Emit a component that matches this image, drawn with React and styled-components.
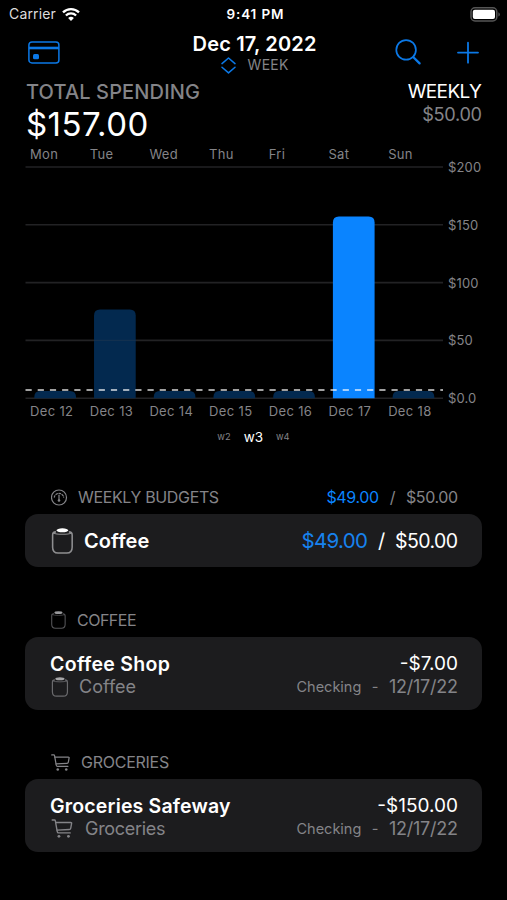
import React from "react";
import styled, { createGlobalStyle } from "styled-components";

const BLUE = "#0a84ff";
const GRAY = "#848488";

const GlobalStyle = createGlobalStyle`
  * { box-sizing: border-box; }
  html, body { margin: 0; background: #000; }
  body { font-family: Inter, "Liberation Sans", sans-serif; color: #fff; }
  svg { display: block; flex: none; }
`;

const Screen = styled.main`
  width: 507px;
  height: 900px;
  overflow: hidden;
  background: #000;
`;

const Text = styled.span`
  display: block;
  white-space: pre;
  font-size: ${(p) => p.$size}px;
  line-height: ${(p) => p.$line || 24}px;
  font-weight: ${(p) => p.$weight || 400};
  letter-spacing: ${(p) => p.$track || 0}px;
  margin-right: ${(p) => -(p.$track || 0)}px;
  color: ${(p) => p.$color || "#fff"};
`;

const StatusBar = styled.header`
  display: grid;
  grid-template-columns: 1fr auto 1fr;
  align-items: center;
  height: 28px;
  padding: 0 6px 0 9px;
`;

const StatusLeft = styled.div`
  display: flex;
  align-items: center;
  gap: 6px;
`;

const StatusRight = styled.div`
  display: flex;
  justify-content: flex-end;
`;

const NavBar = styled.nav`
  display: grid;
  grid-template-columns: 1fr auto 1fr;
  height: 52px;
  padding: 0 28px;
`;

const NavActions = styled.div`
  display: flex;
  justify-content: flex-end;
  gap: 35px;
  padding-top: 11px;
`;

const NavLeading = styled.div`
  padding-top: 13px;
`;

const NavTitle = styled.div`
  display: flex;
  flex-direction: column;
  align-items: center;
  padding: 4px 0 0 2px;
`;

const Period = styled.div`
  display: flex;
  align-items: center;
  gap: 12px;
  height: 18px;
`;

const Summary = styled.section`
  display: flex;
  justify-content: space-between;
  height: 64px;
  padding: 0 25px 0 26px;
`;

const SummaryEnd = styled.div`
  display: flex;
  flex-direction: column;
  align-items: flex-end;
`;

const Chart = styled.section`
  padding-left: 25px;
`;

const DayRow = styled.div`
  display: grid;
  grid-template-columns: repeat(7, 59.7px);
  padding-left: 5px;
`;

const PlotRow = styled.div`
  display: flex;
  margin-top: 2px;
`;

const Axis = styled.div`
  display: flex;
  flex-direction: column;
  justify-content: space-between;
  height: 251px;
  margin: -9px 0 -7px 5px;
`;

const Pager = styled.div`
  display: flex;
  justify-content: center;
  align-items: center;
  gap: 13px;
  height: 26px;
  margin-top: 3px;
`;

const Group = styled.section`
  margin: ${(p) => p.$top}px 25px 0;
`;

const GroupHeader = styled.div`
  display: flex;
  align-items: center;
  height: 24px;
  padding: 0 24px 0 26px;
  margin-bottom: 5px;
`;

const HeaderTitle = styled.div`
  display: flex;
  align-items: center;
  gap: ${(p) => p.$gap}px;
  margin-right: auto;
`;

const Card = styled.article`
  display: flex;
  flex-direction: column;
  justify-content: center;
  height: ${(p) => p.$height}px;
  padding: ${(p) => p.$padTop || 0}px 24px 0 25px;
  border-radius: 13px;
  background: #1c1c1e;
`;

const Line = styled.div`
  display: flex;
  align-items: center;
  justify-content: space-between;
  height: ${(p) => p.$height || 23}px;
`;

const Cluster = styled.div`
  display: flex;
  align-items: center;
  gap: ${(p) => p.$gap}px;
  padding-left: ${(p) => p.$inset || 0}px;
`;

const WifiIcon = () => (
  <svg width="18" height="15" viewBox="0 0 18 14" fill="none" stroke="#fff" strokeWidth="2.3">
    <path d="M1 4.9a11.4 11.4 0 0 1 16 0" />
    <path d="M3.9 8a7.2 7.2 0 0 1 10.2 0" />
    <path d="M9 13.5 6.1 10.6a4.1 4.1 0 0 1 5.8 0Z" fill="#fff" stroke="none" />
  </svg>
);

const BatteryIcon = () => (
  <svg width="31" height="15" viewBox="0 0 31 15">
    <rect x="1" y="0.8" width="25.8" height="13.2" rx="4" fill="none" stroke="#555" strokeWidth="1.5" />
    <rect x="2.8" y="2.8" width="22.2" height="9.2" rx="2" fill="#fff" />
    <path d="M28.4 5.2c2 .8 2 3.6 0 4.4Z" fill="#555" />
  </svg>
);

const CardIcon = () => (
  <svg width="32" height="23" viewBox="0 0 32 23" fill="none" stroke="#0b78e6">
    <rect x="0.9" y="0.9" width="30" height="21" rx="3" strokeWidth="1.5" />
    <path d="M1 7h30" strokeWidth="2.6" />
    <rect x="5" y="13" width="6" height="5.2" rx="1.5" fill="#0b78e6" stroke="none" />
  </svg>
);

const SearchIcon = () => (
  <svg width="27" height="27" viewBox="0 0 27 27" fill="none" stroke="#0b78e6" strokeLinecap="round">
    <circle cx="11.1" cy="10.9" r="9.8" strokeWidth="1.7" />
    <path d="m18.4 18.2 6.2 6.2" strokeWidth="2.3" />
  </svg>
);

const PlusIcon = () => (
  <svg width="22" height="27" viewBox="0 0 22 27" fill="none" stroke="#0b78e6" strokeWidth="1.8" strokeLinecap="round">
    <path d="M11 3.7v20M1 13.6h20" />
  </svg>
);

const UpDownIcon = () => (
  <svg width="15" height="17" viewBox="0 0 15 17" fill="none" stroke="#0b78e6" strokeWidth="1.5" strokeLinecap="round" strokeLinejoin="round">
    <path d="M1 6.6 7.5 1 14 6.6M1 10.3l6.5 5.6 6.5-5.6" />
  </svg>
);

const GaugeIcon = () => (
  <svg width="17" height="17" viewBox="0 0 17 17" fill="none" stroke="#848488" strokeWidth="1.2" strokeLinecap="round">
    <circle cx="8" cy="8.5" r="7.5" />
    <path d="M3.3 8.2a4.8 4.8 0 0 1 9.4 0" strokeDasharray="1.6 1.6" />
    <path d="M8 6.2v4.5" />
    <circle cx="8" cy="11.5" r="1.3" fill="#848488" stroke="none" />
  </svg>
);

const JarIcon = ({ width, height, stroke, lid }) => (
  <svg width={width} height={height} viewBox="0 0 21 25" fill="none">
    <path d="M4.2 3.7C1.8 3.7 1 4.6 1 6.8v11.6c0 3.6 2 5.6 5.2 5.6h8.4c3.2 0 5.2-2 5.2-5.6V6.8c0-2.2-.8-3.1-3.2-3.1" stroke={stroke} strokeWidth="1.5" />
    <path d="M1.2 4.8c4 1.7 14.4 1.7 18.4 0" stroke={stroke} strokeWidth="1" />
    <ellipse cx="10.4" cy="2.2" rx="5.7" ry="1.9" fill={lid} />
  </svg>
);

const CartIcon = ({ width, height }) => (
  <svg width={width} height={height} viewBox="0 0 20 18" fill="none" stroke="#848488" strokeWidth="1.3" strokeLinecap="round" strokeLinejoin="round">
    <path d="M.7 1h2.1c.6 0 .8.2.9.8l1.8 10.1c.1.9.6 1.3 1.4 1.3h10.9" />
    <path d="M4 3.3h14.3c.7 0 .9.3.8.9l-.8 4.4c-.2.9-.6 1.3-1.4 1.3L5.3 10.5" />
    <circle cx="7.1" cy="16.4" r="1.35" fill="#848488" stroke="none" />
    <circle cx="16.1" cy="16.4" r="1.35" fill="#848488" stroke="none" />
  </svg>
);

const DAYS = ["Mon", "Tue", "Wed", "Thu", "Fri", "Sat", "Sun"];
const BAR_TOPS = [225, 143.4, 225, 225, 225, 50.6, 225];
const BASE = 232.3;

const barPath = (x, top) => {
  const r = Math.min(6, BASE - top);
  return `M${x} ${BASE}V${top + r}q0-${r} ${r}-${r}h${41.7 - 2 * r}q${r} 0 ${r} ${r}V${BASE}Z`;
};

const Plot = () => (
  <svg width="418" height="235" viewBox="0 0 418 235">
    {[1, 58.8, 116.6, 174.4, 232.3].map((y) => (
      <path key={y} d={`M.5 ${y}H418`} stroke="#222224" strokeWidth="1.6" />
    ))}
    {BAR_TOPS.map((top, i) => (
      <path key={i} d={barPath(9.3 + i * 59.72, top)} fill={i === 5 ? BLUE : "#03294f"} />
    ))}
    <path d="M69 174.4h41.7" stroke="#12304f" strokeWidth="1.4" />
    <path d="M.5 224H418" stroke="#fff" strokeOpacity=".84" strokeWidth="1.7" strokeDasharray="6.2 6" />
  </svg>
);

const Transaction = ({ title, amount, icon, category, gap, track, categoryTrack }) => (
  <Card $height={73} $padTop={3}>
    <Line>
      <Text $size={19.5} $weight={600} $track={track}>{title}</Text>
      <Text $size={19}>{amount}</Text>
    </Line>
    <Line>
      <Cluster $gap={gap} $inset={1}>
        {icon}
        <Text $size={18} $color={GRAY} $track={categoryTrack}>{category}</Text>
      </Cluster>
      <Cluster $gap={10.5}>
        <Text $size={14.5} $color={GRAY}>Checking</Text>
        <Text $size={14.5} $color={GRAY}>-</Text>
        <Text $size={18} $color={GRAY} $track={-0.25}>12/17/22</Text>
      </Cluster>
    </Line>
  </Card>
);

export default function App() {
  return (
    <Screen>
      <GlobalStyle />
      <StatusBar>
        <StatusLeft>
          <Text $size={14} $color="#ddd" $track={0.15}>Carrier</Text>
          <WifiIcon />
        </StatusLeft>
        <Text $size={13.5} $weight={600} $track={0.85}>9:41 PM</Text>
        <StatusRight><BatteryIcon /></StatusRight>
      </StatusBar>

      <NavBar>
        <NavLeading><CardIcon /></NavLeading>
        <NavTitle>
          <Text $size={20} $weight={600} $track={0.17}>Dec 17, 2022</Text>
          <Period>
            <UpDownIcon />
            <Text $size={14} $color={GRAY} $track={0.3}>WEEK</Text>
          </Period>
        </NavTitle>
        <NavActions>
          <SearchIcon />
          <PlusIcon />
        </NavActions>
      </NavBar>

      <Summary>
        <div>
          <Text $size={20} $weight={500} $color={GRAY} $track={0.13}>TOTAL SPENDING</Text>
          <Text $size={33} $line={41}  $track={0.45}>$157.00</Text>
        </div>
        <SummaryEnd>
          <Text $size={19} $line={23} $track={-0.6}>WEEKLY</Text>
          <Text $size={18.2} $line={23} $color={GRAY} $track={-0.35}>$50.00</Text>
        </SummaryEnd>
      </Summary>

      <Chart>
        <DayRow>
          {DAYS.map((d) => <Text key={d} $size={13} $line={20} $color={GRAY} $track={0.3}>{d}</Text>)}
        </DayRow>
        <PlotRow>
          <Plot />
          <Axis>
            {["$200", "$150", "$100", "$50", "$0.0"].map((v) => (
              <Text key={v} $size={13} $line={20} $color={GRAY} $track={0.15}>{v}</Text>
            ))}
          </Axis>
        </PlotRow>
        <DayRow>
          {DAYS.map((d, i) => (
            <Text key={d} $size={13} $line={20} $color={GRAY} $track={0.35}>{`Dec ${12 + i}`}</Text>
          ))}
        </DayRow>
      </Chart>
      <Pager>
        <Text $size={9.3} $color={GRAY}>w2</Text>
        <Text $size={13.5}>w3</Text>
        <Text $size={9.3} $color={GRAY}>w4</Text>
      </Pager>

      <Group $top={35}>
        <GroupHeader>
          <HeaderTitle $gap={10}>
            <GaugeIcon />
            <Text $size={16} $color={GRAY} $track={-0.35}>WEEKLY BUDGETS</Text>
          </HeaderTitle>
          <Cluster $gap={10.5}>
            <Text $size={16} $color={BLUE} $track={-0.35}>$49.00</Text>
            <Text $size={16} $color={GRAY}>/</Text>
            <Text $size={16} $color={GRAY} $track={-0.4}>$50.00</Text>
          </Cluster>
        </GroupHeader>
        <Card $height={53}>
          <Line $height={26}>
            <Cluster $gap={10} $inset={1}>
              <JarIcon width={23} height={26} stroke="#8e8e90" lid="#fff" />
              <Text $size={20} $weight={600} $track={0.1}>Coffee</Text>
            </Cluster>
            <Cluster $gap={10}>
              <Text $size={20.5} $color="#1782ee" $track={-0.7}>$49.00</Text>
              <Text $size={20}>/</Text>
              <Text $size={19.5} $track={-0.6}>$50.00</Text>
            </Cluster>
          </Line>
        </Card>
      </Group>

      <Group $top={41}>
        <GroupHeader>
          <HeaderTitle $gap={11}>
            <JarIcon width={15} height={18} stroke="#555558" lid="#99999c" />
            <Text $size={16} $color={GRAY} $track={-0.5}>COFFEE</Text>
          </HeaderTitle>
        </GroupHeader>
        <Transaction
          title="Coffee Shop"
          amount="-$7.00"
          category="Coffee"
          gap={10}
          track={0.32}
          icon={<JarIcon width={18} height={20} stroke="#6a6a6d" lid="#a5a5a8" />}
        />
      </Group>

      <Group $top={40}>
        <GroupHeader>
          <HeaderTitle $gap={11}>
            <CartIcon width={19} height={17} />
            <Text $size={16} $color={GRAY} $track={-0.25}>GROCERIES</Text>
          </HeaderTitle>
        </GroupHeader>
        <Transaction
          title="Groceries Safeway"
          amount="-$150.00"
          category="Groceries"
          gap={12}
          track={0.17}
          categoryTrack={-0.3}
          icon={<CartIcon width={22} height={19} />}
        />
      </Group>
    </Screen>
  );
}
